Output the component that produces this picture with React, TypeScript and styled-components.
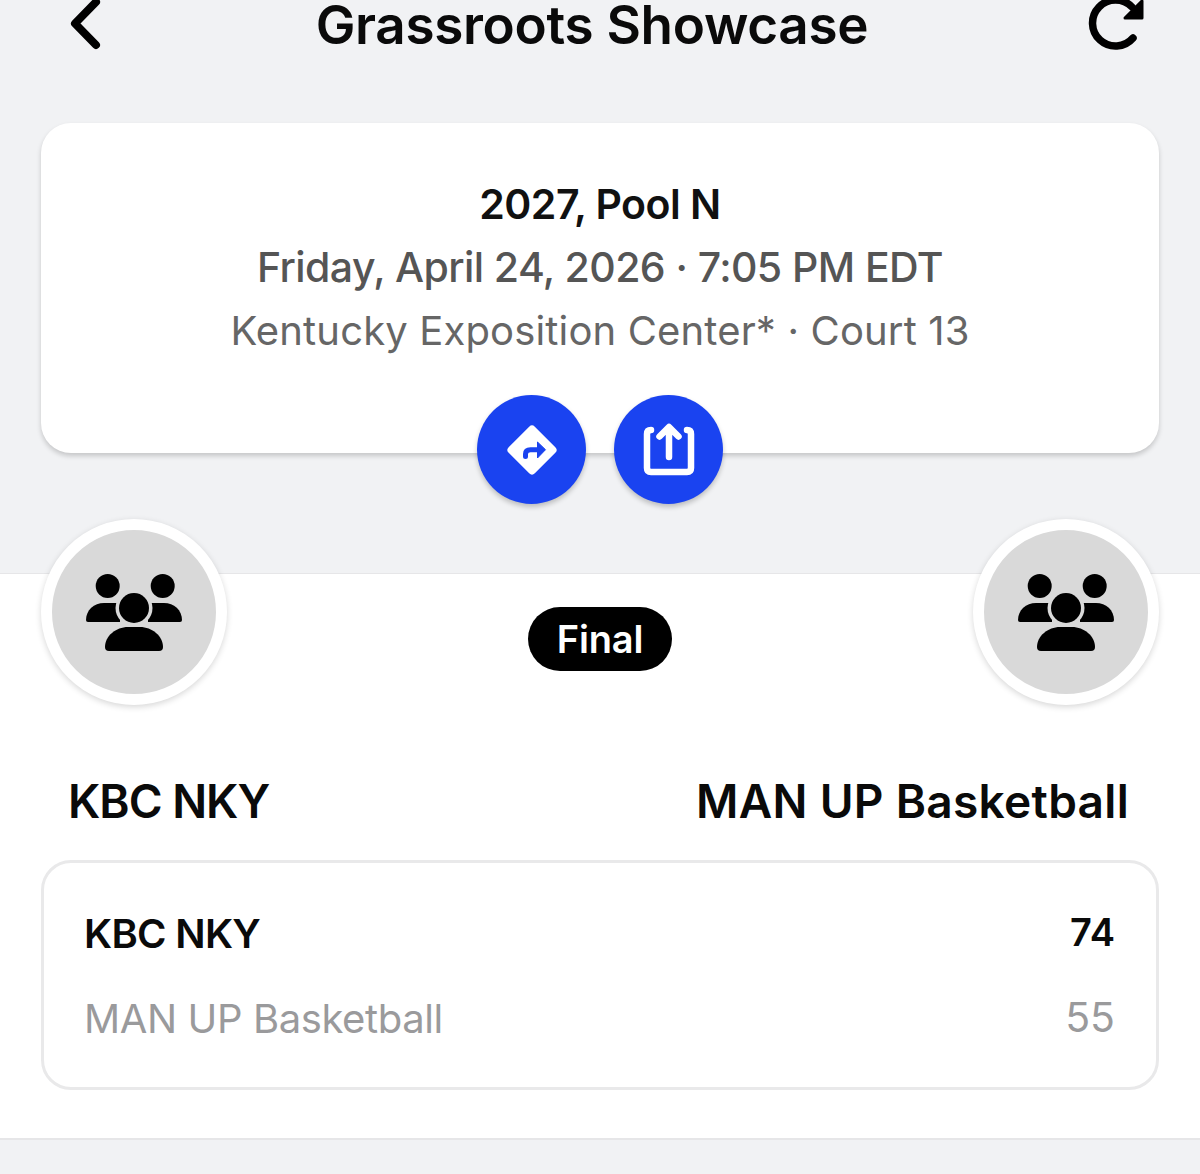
import React from 'react'
import styled, { createGlobalStyle } from 'styled-components'

const GlobalStyle = createGlobalStyle`
  html, body {
    margin: 0;
    padding: 0;
    background: #f1f2f4;
    font-family: Inter, "Liberation Sans", sans-serif;
  }
`

const Page = styled.div`
  width: 1200px;
  height: 1174px;
  overflow: hidden;
  background: #f1f2f4;
`

const Header = styled.header`
  height: 50px;
  display: flex;
  align-items: center;
  padding: 0 53px 0 68px;
`

const IconButton = styled.div`
  display: flex;
  flex: none;
  color: #000;
`

const Title = styled.h1`
  flex: 1;
  margin: 0;
  padding-right: 5px;
  text-align: center;
  font-size: 53px;
  line-height: 50px;
  font-weight: 600;
  color: #0a0a0a;
  letter-spacing: -0.3px;
  white-space: nowrap;
`

const InfoCard = styled.section`
  box-sizing: border-box;
  height: 330px;
  margin: 73px 41px 0;
  padding-top: 50px;
  background: #fff;
  border-radius: 30px;
  box-shadow: 0 3px 5px rgba(0, 0, 0, 0.18);
  display: flex;
  flex-direction: column;
  align-items: center;
`

const InfoLine = styled.div<{ $size: number; $weight: number; $color: string; $spacing: number }>`
  flex: none;
  height: 63px;
  line-height: 63px;
  font-size: ${(p) => p.$size}px;
  font-weight: ${(p) => p.$weight};
  color: ${(p) => p.$color};
  letter-spacing: ${(p) => p.$spacing}px;
  white-space: nowrap;
`

const Actions = styled.div`
  display: flex;
  flex: none;
  gap: 28px;
  margin-top: 33px;
`

const RoundButton = styled.div`
  width: 109px;
  height: 109px;
  border-radius: 50%;
  background: #1a43f0;
  box-shadow: 0 3px 5px rgba(0, 0, 0, 0.22);
  display: flex;
  align-items: center;
  justify-content: center;
`

const Section = styled.section`
  box-sizing: border-box;
  height: 567px;
  margin-top: 120px;
  background: #fff;
  border-top: 1px solid #e6e6e8;
  border-bottom: 2px solid #e6e6e8;
`

const TeamsRow = styled.div`
  display: flex;
  justify-content: space-between;
  padding: 0 41px;
  margin-top: -55px;
  height: 186px;
`

const Avatar = styled.div`
  box-sizing: border-box;
  width: 186px;
  height: 186px;
  padding-top: 2px;
  border-radius: 50%;
  border: 11px solid #fff;
  background: #d9d9d9;
  box-shadow: 0 2px 6px rgba(0, 0, 0, 0.16);
  display: flex;
  align-items: center;
  justify-content: center;
`

const StatusWrap = styled.div`
  padding-top: 88px;
`

const StatusPill = styled.div`
  width: 144px;
  height: 64px;
  border-radius: 32px;
  background: #000;
  color: #fff;
  font-size: 38px;
  font-weight: 600;
  line-height: 64px;
  text-align: center;
  letter-spacing: -0.2px;
`

const NamesRow = styled.div`
  display: flex;
  justify-content: space-between;
  padding: 0 71px 0 68px;
  margin-top: 66px;
  height: 60px;
  line-height: 60px;
  font-size: 46px;
  font-weight: 600;
  color: #0a0a0a;
`

const TeamName = styled.span<{ $spacing: number }>`
  letter-spacing: ${(p) => p.$spacing}px;
`

const ScoreCard = styled.div`
  box-sizing: border-box;
  height: 230px;
  margin: 29px 41px 0;
  padding: 46px 41px 0 40px;
  border: 3px solid #e9e9ea;
  border-radius: 30px;
  display: flex;
  flex-direction: column;
  gap: 35px;
`

const ScoreRow = styled.div<{ $winner?: boolean }>`
  display: flex;
  flex: none;
  justify-content: space-between;
  height: 50px;
  line-height: 50px;
  color: ${(p) => (p.$winner ? '#0a0a0a' : '#9a9a9c')};
  font-weight: ${(p) => (p.$winner ? 600 : 400)};
`

const ScoreName = styled.span<{ $winner?: boolean }>`
  font-size: 40px;
  letter-spacing: ${(p) => (p.$winner ? -0.7 : -0.4)}px;
`

const ScoreValue = styled.span<{ $winner?: boolean }>`
  font-size: ${(p) => (p.$winner ? 38 : 41)}px;
  margin-top: -2px;
`

const Chevron = () => (
  <svg width="36" height="60" viewBox="0 0 36 60" fill="none">
    <path d="M28 7 L7 28.5 L28 50" stroke="currentColor" strokeWidth="8" strokeLinecap="round" strokeLinejoin="round" />
  </svg>
)

const Refresh = () => (
  <svg width="62" height="62" viewBox="0 0 62 62" fill="none">
    <path d="M48 44 A23 23 0 1 1 47 13" stroke="currentColor" strokeWidth="7.5" strokeLinecap="round" />
    <path d="M57 7 V24 H40 Z" fill="currentColor" stroke="currentColor" strokeWidth="3" strokeLinejoin="round" />
  </svg>
)

const Directions = () => (
  <svg width="54" height="54" viewBox="0 0 54 54" fill="none">
    <rect x="8.5" y="8.5" width="37" height="37" rx="4" transform="rotate(45 27 27)" fill="#fff" />
    <path d="M20.5 33.5 V31 Q20.5 26.7 25.5 26.7 H35" stroke="#1a43f0" strokeWidth="5" strokeLinecap="round" />
    <path d="M32.5 19 L40.5 26.7 L32.5 35 Z" fill="#1a43f0" stroke="#1a43f0" strokeWidth="1" strokeLinejoin="round" />
  </svg>
)

const Share = () => (
  <svg width="56" height="56" viewBox="0 0 56 56" fill="none">
    <path
      d="M10 8 Q6 8 6 12 V46 Q6 50 10 50 H46 Q50 50 50 46 V12 Q50 8 46 8"
      stroke="#fff"
      strokeWidth="6.5"
      strokeLinecap="round"
      strokeLinejoin="round"
    />
    <path
      d="M28 35 V6 M18.5 14.5 L28 5 L37.5 14.5"
      stroke="#fff"
      strokeWidth="6.5"
      strokeLinecap="round"
      strokeLinejoin="round"
    />
  </svg>
)

const Group = () => (
  <svg width="96" height="78" viewBox="0 0 96 78" fill="#000">
    <circle cx="21.7" cy="12" r="12" />
    <circle cx="76.7" cy="12" r="12" />
    <path d="M0 46 C0 36 8 29 18 29 H34 V48 H2 Q0 48 0 46 Z" />
    <path d="M96 46 C96 36 88 29 78 29 H62 V48 H94 Q96 48 96 46 Z" />
    <circle cx="48" cy="34" r="18.5" fill="#d9d9d9" />
    <circle cx="48" cy="34" r="15" />
    <path d="M19 73 C19 62 30 53 42 53 H54 C66 53 77 62 77 73 Q77 77 73 77 H23 Q19 77 19 73 Z" />
  </svg>
)

const App: React.FC = () => {
  return (
    <Page>
      <GlobalStyle />
      <Header>
        <IconButton>
          <Chevron />
        </IconButton>
        <Title>Grassroots Showcase</Title>
        <IconButton>
          <Refresh />
        </IconButton>
      </Header>

      <InfoCard>
        <InfoLine $size={41} $weight={600} $color="#111" $spacing={-0.5}>
          2027, Pool N
        </InfoLine>
        <InfoLine $size={41} $weight={500} $color="#555" $spacing={-0.58}>
          Friday, April 24, 2026 · 7:05 PM EDT
        </InfoLine>
        <InfoLine $size={40} $weight={400} $color="#666" $spacing={0.15}>
          Kentucky Exposition Center* · Court 13
        </InfoLine>
        <Actions>
          <RoundButton>
            <Directions />
          </RoundButton>
          <RoundButton>
            <Share />
          </RoundButton>
        </Actions>
      </InfoCard>

      <Section>
        <TeamsRow>
          <Avatar>
            <Group />
          </Avatar>
          <StatusWrap>
            <StatusPill>Final</StatusPill>
          </StatusWrap>
          <Avatar>
            <Group />
          </Avatar>
        </TeamsRow>

        <NamesRow>
          <TeamName $spacing={-1}>KBC NKY</TeamName>
          <TeamName $spacing={0.3}>MAN UP Basketball</TeamName>
        </NamesRow>

        <ScoreCard>
          <ScoreRow $winner>
            <ScoreName $winner>KBC NKY</ScoreName>
            <ScoreValue $winner>74</ScoreValue>
          </ScoreRow>
          <ScoreRow>
            <ScoreName>MAN UP Basketball</ScoreName>
            <ScoreValue>55</ScoreValue>
          </ScoreRow>
        </ScoreCard>
      </Section>
    </Page>
  )
}

export default App
